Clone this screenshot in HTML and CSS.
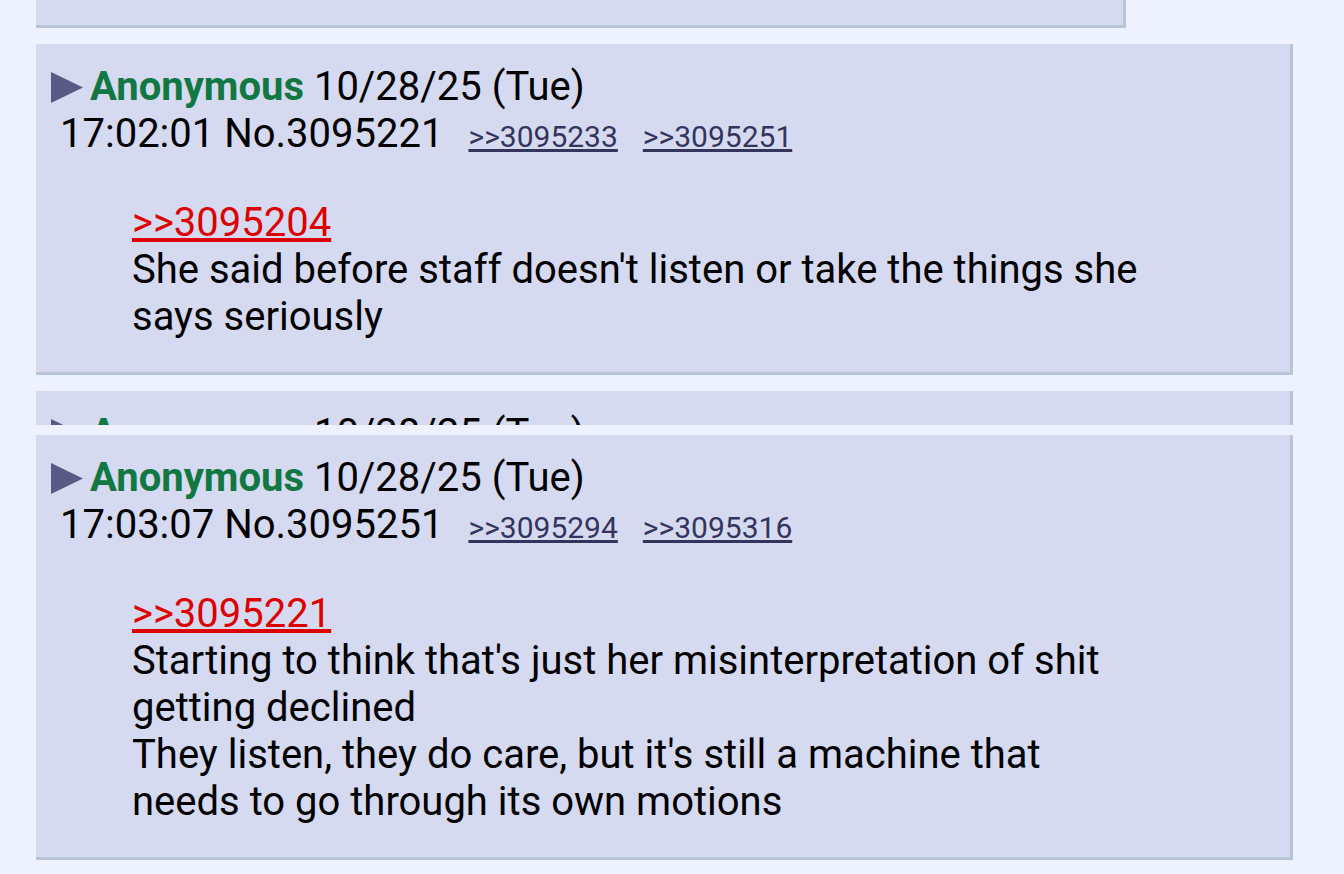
FILE: index.html
```html
<!DOCTYPE html>
<html>
<head>
<meta charset="utf-8">
<link rel="stylesheet" href="styles.css">
</head>
<body>
<div class="thread">
  <div class="post post-top">
    <div class="post-top-fill"></div>
  </div>

  <div class="post">
    <div class="info">
      <div class="line1"><svg class="menu" width="32" height="31" viewBox="0 0 32 31"><polygon points="0,0 32,15.5 0,31" fill="#575a84"/></svg><span class="name">Anonymous</span> <span class="date">10/28/25 (Tue)</span></div>
      <div class="line2">
        <span>17:02:01 No.3095221</span>
        <span class="backlinks"><a class="backlink" href="#">&gt;&gt;3095233</a><a class="backlink" href="#">&gt;&gt;3095251</a></span>
      </div>
    </div>
    <div class="message">
      <a class="quotelink" href="#">&gt;&gt;3095204</a><br>
      She said before staff doesn't listen or take the things she says seriously
    </div>
  </div>

  <div class="clip">
    <div class="post">
      <div class="info">
        <div class="line1"><svg class="menu" width="32" height="31" viewBox="0 0 32 31"><polygon points="0,0 32,15.5 0,31" fill="#575a84"/></svg><span class="name">Anonymous</span> <span class="date">10/28/25 (Tue)</span></div>
      </div>
    </div>
  </div>

  <div class="post post-last">
    <div class="info">
      <div class="line1"><svg class="menu" width="32" height="31" viewBox="0 0 32 31"><polygon points="0,0 32,15.5 0,31" fill="#575a84"/></svg><span class="name">Anonymous</span> <span class="date">10/28/25 (Tue)</span></div>
      <div class="line2">
        <span>17:03:07 No.3095251</span>
        <span class="backlinks"><a class="backlink" href="#">&gt;&gt;3095294</a><a class="backlink" href="#">&gt;&gt;3095316</a></span>
      </div>
    </div>
    <div class="message">
      <a class="quotelink" href="#">&gt;&gt;3095221</a><br>
      Starting to think that's just her misinterpretation of shit getting declined<br>
      They listen, they do care, but it's still a machine that needs to go through its own motions
    </div>
  </div>
</div>
</body>
</html>
```

FILE: styles.css
```css
html, body {
  margin: 0;
  padding: 0;
  background: #eef2ff;
}
body {
  font-family: Roboto, "Liberation Sans", sans-serif;
  font-size: 40px;
  line-height: 47px;
  color: #000;
  overflow: hidden;
  height: 874px;
}
.thread {
  padding-left: 36px;
  display: flex;
  flex-direction: column;
  align-items: flex-start;
}
.post {
  background: #d6daf0;
  border-right: 3px solid #b7c5d9;
  border-bottom: 3px solid #b7c5d9;
  width: 1254px;
  box-sizing: content-box;
  padding: 19px 0 32px 0;
}
.post-top {
  width: 1087px;
  padding: 0;
  margin-bottom: 16px;
}
.post-top-fill {
  height: 25px;
}
.post-last {
  margin-top: 10px;
  padding-bottom: 32px;
}
.clip {
  height: 34px;
  overflow: hidden;
  margin-top: 16px;
}
.info {
  padding-left: 15px;
}
.line1 {
  white-space: nowrap;
  height: 47px;
  overflow: visible;
}
.menu {
  display: inline-block;
  vertical-align: -3px;
  margin-right: 7px;
}
.name {
  color: #117743;
  font-weight: bold;
}
.line2 {
  padding-left: 9px;
  height: 47px;
  display: flex;
  align-items: baseline;
}
.backlinks {
  display: flex;
  gap: 25px;
  margin-left: 25px;
  font-size: 30px;
}
.backlink {
  color: #34345c;
  text-decoration: underline;
}
.message {
  margin: 42px 0 0 96px;
  width: 1015px;
}
.quotelink {
  color: #dd0000;
  text-decoration: underline;
}
```
